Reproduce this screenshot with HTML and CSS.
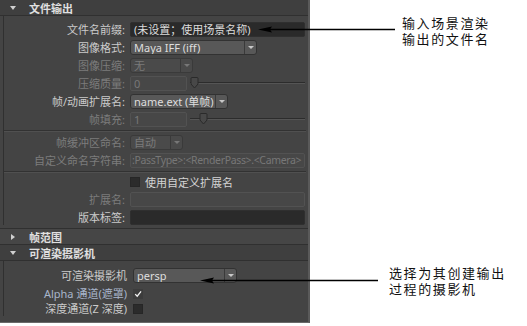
FILE: index.html
```html
<!DOCTYPE html>
<html lang="zh">
<head>
    <meta charset="UTF-8">
    <title>渲染设置</title>
    <link rel="stylesheet" href="styles.css">
</head>
<body>
<div class="page">
    <div class="panel">
        <div class="sec-head"><span class="tri"></span>文件输出</div>
        <div class="frame">
            <div class="row">
                <label>文件名前缀:</label>
                <div class="ctl"><div class="field dark wide">(未设置；使用场景名称)</div></div>
            </div>
            <div class="row">
                <label>图像格式:</label>
                <div class="ctl"><div class="dd w-format"><span class="val">Maya IFF (iff)</span><span class="btn"></span></div></div>
            </div>
            <div class="row off">
                <label>图像压缩:</label>
                <div class="ctl"><div class="dd off w-comp"><span class="val">无</span><span class="btn"></span></div></div>
            </div>
            <div class="row off">
                <label>压缩质量:</label>
                <div class="ctl">
                    <div class="field off w-num">0</div>
                    <div class="slider">
                        <svg class="thumb" width="9" height="12" viewBox="0 0 9 12"><path d="M1 1.5 Q1 0.5 2 0.5 H7 Q8 0.5 8 1.5 V7 L4.5 11 L1 7 Z" fill="#484848" stroke="#2a2a2a"/></svg>
                    </div>
                </div>
            </div>
            <div class="row">
                <label>帧/动画扩展名:</label>
                <div class="ctl"><div class="dd w-ext"><span class="val">name.ext (单帧)</span><span class="btn"></span></div></div>
            </div>
            <div class="row off">
                <label>帧填充:</label>
                <div class="ctl">
                    <div class="field off w-num">1</div>
                    <div class="slider">
                        <svg class="thumb t-fill" width="9" height="12" viewBox="0 0 9 12"><path d="M1 1.5 Q1 0.5 2 0.5 H7 Q8 0.5 8 1.5 V7 L4.5 11 L1 7 Z" fill="#484848" stroke="#2a2a2a"/></svg>
                    </div>
                </div>
            </div>
            <div class="sep"></div>
            <div class="row off">
                <label>帧缓冲区命名:</label>
                <div class="ctl"><div class="dd off w-buf"><span class="val">自动</span><span class="btn"></span></div></div>
            </div>
            <div class="row off">
                <label>自定义命名字符串:</label>
                <div class="ctl"><div class="field off wide small">:PassType&gt;:&lt;RenderPass&gt;.&lt;Camera&gt;</div></div>
            </div>
            <div class="sep b"></div>
            <div class="row">
                <label></label>
                <div class="ctl"><span class="box"></span><span class="cb-text">使用自定义扩展名</span></div>
            </div>
            <div class="row off">
                <label>扩展名:</label>
                <div class="ctl"><div class="field off wide"></div></div>
            </div>
            <div class="row">
                <label>版本标签:</label>
                <div class="ctl"><div class="field dark wide"></div></div>
            </div>
        </div>
        <div class="sec-head closed"><span class="tri right"></span>帧范围</div>
        <div class="sec-head"><span class="tri"></span>可渲染摄影机</div>
        <div class="frame cam">
            <div class="row">
                <label>可渲染摄影机</label>
                <div class="ctl"><div class="dd w-cam"><span class="val">persp</span><span class="btn"></span></div></div>
            </div>
            <div class="row check">
                <label class="hl">Alpha 通道(遮罩)</label>
                <div class="ctl">
                    <span class="box on">
                        <svg width="10" height="10" viewBox="0 0 10 10"><path d="M1.5 5.2 L4 7.8 L8.8 1.8" fill="none" stroke="#f2f2f2" stroke-width="1.6"/></svg>
                    </span>
                </div>
            </div>
            <div class="row check">
                <label>深度通道(Z 深度)</label>
                <div class="ctl"><span class="box"></span></div>
            </div>
        </div>
    </div>

    <svg class="arrows" width="527" height="326" viewBox="0 0 527 326">
        <line x1="266" y1="29.5" x2="395" y2="29.5" stroke="#000" stroke-width="1.5"/>
        <polygon points="258,29.5 272,26.5 270,29.5 272,32.5" fill="#000"/>
        <line x1="208" y1="280.5" x2="378" y2="280.5" stroke="#000" stroke-width="1.5"/>
        <polygon points="200,280.5 214,277.5 212,280.5 214,283.5" fill="#000"/>
    </svg>
    <div class="note n1">输入场景渲染<br>输出的文件名</div>
    <div class="note n2">选择为其创建输出<br>过程的摄影机</div>
</div>
</body>
</html>
```

FILE: styles.css
```css
body {
    margin: 0;
    background: #fff;
    font-family: "Noto Sans", "Noto Sans CJK SC", sans-serif;
}
.page {
    position: relative;
    width: 527px;
    height: 326px;
    overflow: hidden;
}
.panel {
    width: 308px;
    height: 322px;
    background: #444;
    border-right: 2px solid #5a5a5a;
    border-bottom: 1px solid #6a6a6a;
}
.sec-head {
    height: 15px;
    display: flex;
    align-items: center;
    background: #3f3f3f;
    border-bottom: 1px solid #303030;
    color: #e0e0e0;
    font-size: 11px;
    font-weight: bold;
}
.sec-head.closed {
    border-top: 1px solid #303030;
    background: #464646;
}
.tri {
    width: 0;
    height: 0;
    margin: 0 13px 0 10px;
    border-left: 3.5px solid transparent;
    border-right: 3.5px solid transparent;
    border-top: 4px solid #d0d0d0;
}
.tri.right {
    margin: 0 14px 0 11px;
    border-top: 3.5px solid transparent;
    border-bottom: 3.5px solid transparent;
    border-left: 4px solid #d0d0d0;
    border-right: none;
}
.frame {
    margin-left: 3px;
    border-left: 1px solid #303030;
    padding-top: 6px;
}
.frame.cam {
    padding-top: 7px;
}
.row {
    display: grid;
    grid-template-columns: 121px 1fr;
    column-gap: 5px;
    height: 15px;
    margin-bottom: 3px;
    align-items: center;
}
.cam .row {
    grid-template-columns: 123px 1fr;
    column-gap: 6px;
}
.cam .row.check {
    margin-bottom: 0;
}
.row label {
    text-align: right;
    color: #cbcbcb;
    font-size: 11px;
    line-height: 15px;
    white-space: nowrap;
}
.row.off label {
    color: #7c7c7c;
}
.row label.hl {
    color: #a9b6cc;
}
.ctl {
    display: flex;
    align-items: center;
    height: 15px;
}
.field {
    box-sizing: border-box;
    height: 15px;
    padding: 0 3px;
    border-radius: 2px;
    font-size: 11px;
    line-height: 13px;
    color: #dcdcdc;
    white-space: nowrap;
    overflow: hidden;
}
.field.dark {
    background: #2a2a2a;
    border: 1px solid #2f2f2f;
}
.field.off {
    background: #474747;
    border: 1px solid #525252;
    color: #777;
}
.field.small {
    padding: 0 1px;
    font-size: 10.5px;
    letter-spacing: -0.35px;
}
.wide {
    width: 175px;
}
.w-num {
    width: 57px;
}
.dd {
    box-sizing: border-box;
    display: flex;
    height: 15px;
    background: #585858;
    border: 1px solid #323232;
    border-radius: 3px;
    color: #dedede;
    font-size: 11px;
    line-height: 13px;
    white-space: nowrap;
}
.dd .val {
    flex: 1;
    padding-left: 3px;
    overflow: hidden;
}
.dd .btn {
    width: 11px;
    border-left: 1px solid #3a3a3a;
    display: flex;
    align-items: center;
    justify-content: center;
}
.dd .btn::after {
    content: "";
    width: 0;
    height: 0;
    border-left: 3px solid transparent;
    border-right: 3px solid transparent;
    border-top: 3px solid #c8c8c8;
}
.dd.off {
    background: #4a4a4a;
    border-color: #3a3a3a;
    color: #7a7a7a;
}
.dd.off .btn::after {
    border-top-color: #777;
}
.w-format {
    width: 127px;
}
.w-comp {
    width: 63px;
}
.w-ext {
    width: 98px;
}
.w-buf {
    width: 53px;
}
.w-cam {
    width: 104px;
}
.slider {
    position: relative;
    flex: 1;
    height: 15px;
    margin: 0 3px 0 3px;
}
.slider::before {
    content: "";
    position: absolute;
    left: 0;
    right: 0;
    top: 6px;
    height: 1px;
    background: #2c2c2c;
    border-bottom: 1px solid #555;
}
.thumb {
    position: absolute;
    left: 0;
    top: 1px;
}
.thumb.t-fill {
    left: 9px;
}
.box {
    box-sizing: border-box;
    width: 10px;
    height: 10px;
    background: #2b2b2b;
    border: 1px solid #262626;
    display: flex;
    align-items: center;
    justify-content: center;
}
.box.on {
    background: #3c3c3c;
    border-color: #3c3c3c;
}
.box svg {
    display: block;
}
.cb-text {
    margin-left: 5px;
    color: #d4d4d4;
    font-size: 11px;
}
.sep {
    border-top: 1px solid #323232;
    border-bottom: 1px solid #505050;
    margin: 1px 2px 3px 0;
}
.sep.b {
    margin-bottom: 1px;
}
.arrows {
    position: absolute;
    left: 0;
    top: 0;
    pointer-events: none;
}
.note {
    position: absolute;
    font-family: "Noto Sans CJK SC", sans-serif;
    font-size: 13px;
    line-height: 16px;
    letter-spacing: 1.6px;
    color: #111;
}
.n1 {
    left: 402px;
    top: 15px;
}
.n2 {
    left: 389px;
    top: 265px;
}
```
